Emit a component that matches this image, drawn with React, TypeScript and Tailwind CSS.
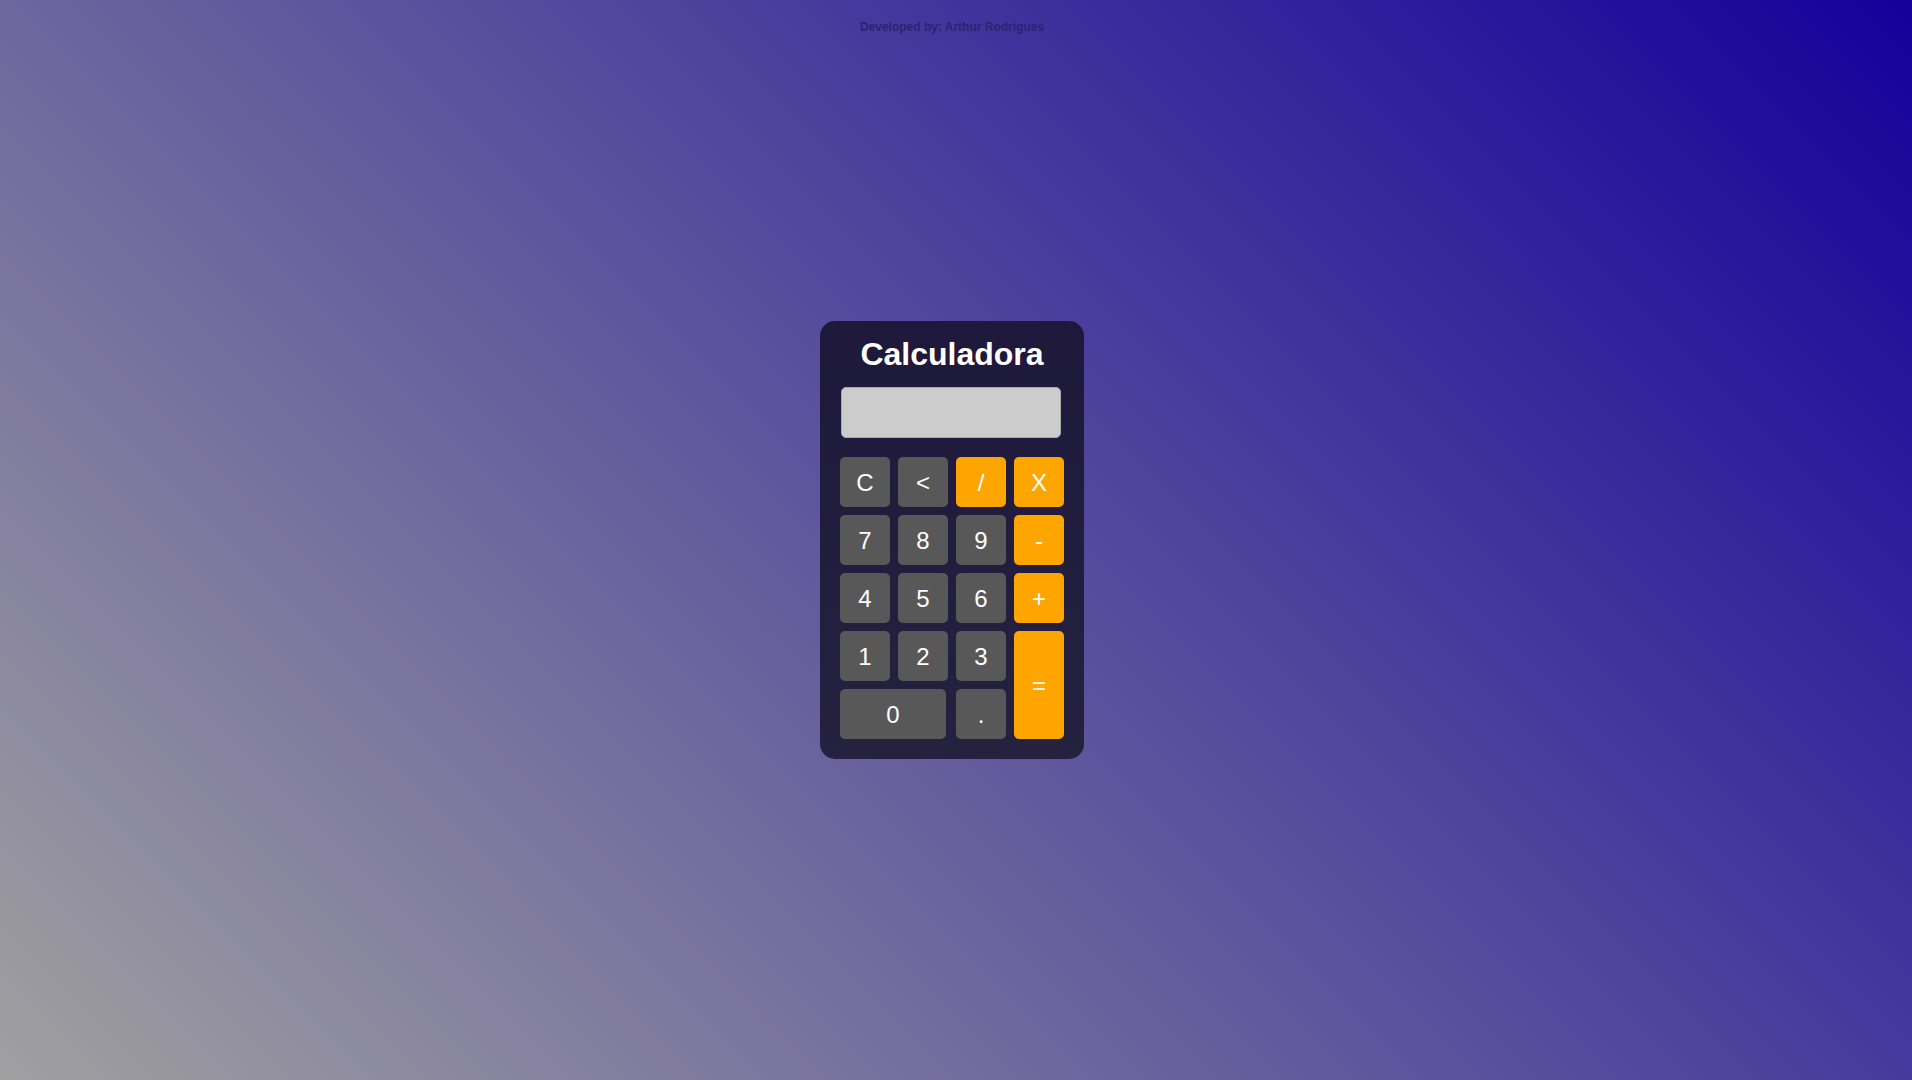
import React from 'react';

type Key = { label: string; tone: 'gray' | 'orange'; span?: string };

const keys: Key[] = [
  { label: 'C', tone: 'gray' },
  { label: '<', tone: 'gray' },
  { label: '/', tone: 'orange' },
  { label: 'X', tone: 'orange' },
  { label: '7', tone: 'gray' },
  { label: '8', tone: 'gray' },
  { label: '9', tone: 'gray' },
  { label: '-', tone: 'orange' },
  { label: '4', tone: 'gray' },
  { label: '5', tone: 'gray' },
  { label: '6', tone: 'gray' },
  { label: '+', tone: 'orange' },
  { label: '1', tone: 'gray' },
  { label: '2', tone: 'gray' },
  { label: '3', tone: 'gray' },
  { label: '=', tone: 'orange', span: 'row-span-2 h-full' },
  { label: '0', tone: 'gray', span: 'col-span-2 w-[106px]' },
  { label: '.', tone: 'gray' },
];

const App: React.FC = () => {
  return (
    <div className="grid h-screen w-full overflow-hidden bg-[linear-gradient(45deg,#a0a0a0,#15009a)] pr-2 font-['Liberation_Sans',Arial,sans-serif]">
      {/* credit line */}
      <p className="[grid-area:1/1] self-start justify-self-center mt-5 text-[12px] leading-[14px] font-bold text-[#2b2373]">
        Developed by: Arthur Rodrigues
      </p>

      {/* calculator */}
      <div className="[grid-area:1/1] self-center justify-self-center w-[264px] rounded-[15px] bg-[linear-gradient(to_bottom,#1e193b,#25213f)] px-5 pt-[15px] pb-5">
        <h1 className="text-center text-[32px] leading-[37px] font-bold text-white">Calculadora</h1>
        <div className="ml-px mt-[14px] h-[51px] w-[220px] rounded-[5px] border border-[#a9a9a9] bg-[#cccccc]" />
        <div className="mt-[19px] grid grid-cols-[repeat(4,50px)] auto-rows-[50px] gap-2">
          {keys.map((k) => (
            <button
              key={k.label}
              className={`flex items-center justify-center rounded-[5px] pt-[2px] text-2xl text-white ${
                k.tone === 'orange' ? 'bg-[#ffa500]' : 'bg-[#585858]'
              } ${k.span ?? ''}`}
            >
              {k.label}
            </button>
          ))}
        </div>
      </div>
    </div>
  );
};

export default App;
